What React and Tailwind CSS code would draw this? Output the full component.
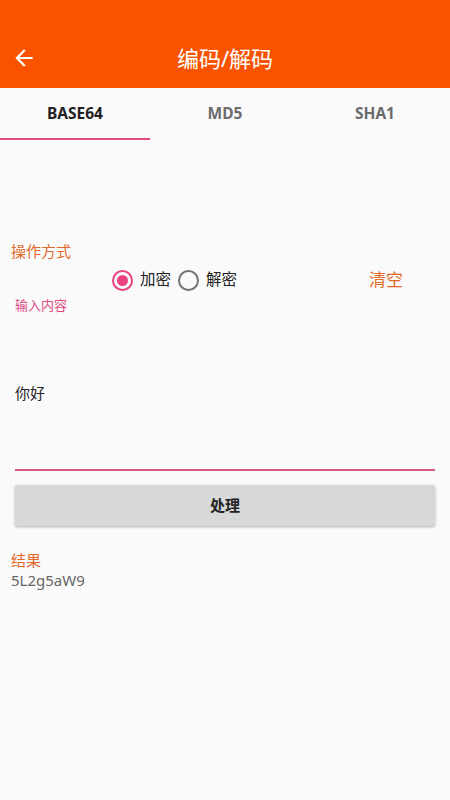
import React, { useState } from "react";

const font = { fontFamily: '"Noto Sans", "Noto Sans CJK SC", sans-serif' };

function Radio({ checked, label, onClick }) {
  return (
    <button onClick={onClick} className="flex items-center gap-[7px]">
      <span
        className={`w-[21px] h-[21px] rounded-full border-2 flex items-center justify-center ${
          checked ? "border-[#e9417f]" : "border-[#737373]"
        }`}
      >
        {checked && <span className="w-[11px] h-[11px] rounded-full bg-[#e9417f]" />}
      </span>
      <span className="text-[15.5px] text-[#222]">{label}</span>
    </button>
  );
}

export default function App() {
  const [tab, setTab] = useState(0);
  const [mode, setMode] = useState(0);
  const tabs = ["BASE64", "MD5", "SHA1"];

  return (
    <div className="w-[450px] h-[800px] bg-[#fafafa] flex flex-col" style={font}>
      {/* header */}
      <div className="h-[88px] bg-[#f95300] relative flex items-end pb-[16px]">
        <svg className="absolute left-[11px] top-[45px]" width="26" height="26" viewBox="0 0 24 24">
          <path d="M20 11H7.83l5.59-5.59L12 4l-8 8 8 8 1.41-1.41L7.83 13H20v-2z" fill="#fff" />
        </svg>
        <div className="w-full text-center text-white text-[22px] leading-[28px]">编码/解码</div>
      </div>

      {/* tabs */}
      <div className="h-[52px] flex relative">
        {tabs.map((t, i) => (
          <button
            key={t}
            onClick={() => setTab(i)}
            className={`flex-1 flex items-center justify-center text-[15.5px] font-bold relative ${
              tab === i ? "text-[#222]" : "text-[#6b6b6b]"
            }`}
          >
            {t}
            {tab === i && <span className="absolute left-0 right-0 bottom-0 h-[2px] bg-[#e24a86]" />}
          </button>
        ))}
      </div>

      {/* body */}
      <div className="pt-[101px] px-[11px]">
        <div className="text-[15px] text-[#e2692a] leading-[20px]">操作方式</div>
        <div className="flex items-center h-[36px] mt-[1px]">
          <div className="w-[101px]" />
          <div className="flex items-center gap-[7px]">
            <Radio checked={mode === 0} label="加密" onClick={() => setMode(0)} />
            <Radio checked={mode === 1} label="解密" onClick={() => setMode(1)} />
          </div>
          <div className="ml-[132px] text-[17px] text-[#e2692a]">清空</div>
        </div>
        <div className="pl-[4px] text-[13px] text-[#e04a86] leading-[16px] mt-[-1px]">输入内容</div>

        <div className="px-[4px] pt-[70px]">
          <div className="text-[15px] text-[#222] leading-[20px]">你好</div>
          <div className="mt-[66px] h-[2px] bg-[#d9588a]" />
          <button className="mt-[14px] w-full h-[41px] bg-[#d7d8d8] rounded-[2px] shadow-[0_1px_3px_rgba(0,0,0,0.3)] text-[15px] font-semibold text-[#222]">
            处理
          </button>
        </div>

        <div className="mt-[24px] text-[15px] text-[#e2692a] leading-[20px]">结果</div>
        <div className="text-[15px] text-[#666] leading-[20px]">5L2g5aW9</div>
      </div>
    </div>
  );
}
